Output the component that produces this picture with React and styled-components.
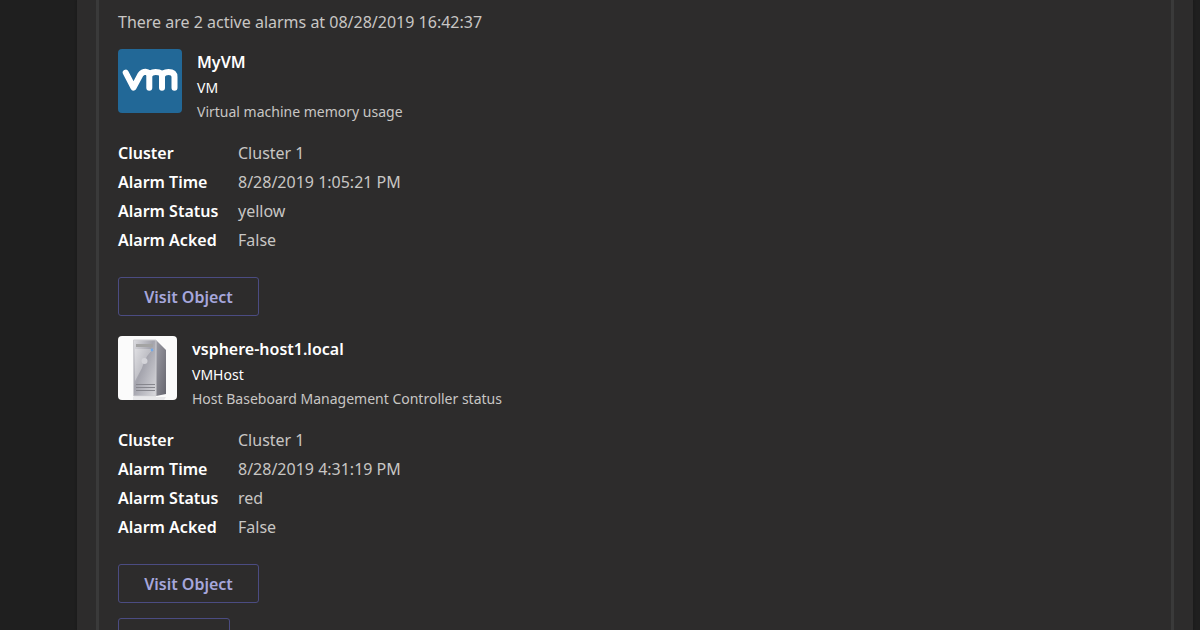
import React from "react";
import styled, { createGlobalStyle } from "styled-components";

const GlobalStyle = createGlobalStyle`
  *, *::before, *::after { box-sizing: border-box; }
  body {
    margin: 0;
    background: #1f1f1f;
    color: #c8c6c4;
    font: 16px/24px "Segoe UI", "Noto Sans", "Open Sans", sans-serif;
  }
`;

const Viewport = styled.div`
  display: flex;
  height: 100vh;
  padding: 0 7px 0 77px;
  overflow: hidden;
`;

const Message = styled.main`
  flex: 1;
  min-width: 0;
  padding: 0 19px;
  background: #2d2c2c;
  box-shadow: 0 0 2px #161616;
`;

const Card = styled.article`
  padding: 10px 19px;
  border: solid #3a3a3a;
  border-width: 0 3px;
`;

const Summary = styled.p`
  margin: 0 0 15px;
`;

const Section = styled.section`
  margin-bottom: ${(p) => (p.$last ? 15 : 20)}px;
`;

const Header = styled.header`
  display: flex;
  align-items: flex-start;
  gap: 15px;
  height: 76px;
  margin-bottom: 16px;

  svg { flex: none; display: block; }
`;

const Title = styled.h2`
  margin: 0;
  color: #fff;
  font-size: 16px;
  line-height: 26px;
  font-weight: 600;
`;

const Kind = styled.div`
  color: #fff;
  font-size: 14px;
  line-height: 26px;
`;

const Detail = styled.div`
  font-size: 14px;
  line-height: 22px;
`;

const Facts = styled.dl`
  display: grid;
  grid-template-columns: 100px 1fr;
  gap: 5px 20px;
  margin: 0 0 25px;
`;

const FactName = styled.dt`
  color: #fff;
  font-weight: 600;
  white-space: nowrap;
`;

const FactValue = styled.dd`
  margin: 0;
`;

const Action = styled.button`
  display: block;
  min-width: ${(p) => (p.$small ? 112 : 141)}px;
  height: 39px;
  padding: 0 16px;
  border: 1px solid #4b4c82;
  border-radius: 3px;
  background: transparent;
  color: #a6a7dc;
  font: inherit;
  font-weight: 600;
`;

const VmLogo = () => (
  <svg width="64" height="64" viewBox="0 0 64 64" role="img" aria-label="VM">
    <rect width="64" height="64" rx="4" fill="#226897" />
    <path
      d="M7.700 23.700 L15.500 38.700 L22.500 25.500 Q24.500 22.700 27.500 22.700 Q31.300 23 31.300 27 V38.700 M31.300 27 Q32 23 37.600 23 Q44 23 44 27 V38.700 M44 27 Q45 23 50.500 23 Q56.500 23 56.500 28 V38.700"
      fill="none" stroke="#fff" strokeWidth="6" strokeLinecap="round" strokeLinejoin="round"
    />
  </svg>
);

const ServerIcon = () => (
  <svg width="59" height="64" viewBox="0 0 59 64" role="img" aria-label="Server">
    <defs>
      <linearGradient id="front" x1="0" y1="0" x2="1" y2="1">
        <stop offset="0" stopColor="#dedee2" />
        <stop offset="0.450" stopColor="#a4a4ad" />
        <stop offset="1" stopColor="#dadade" />
      </linearGradient>
      <linearGradient id="side" x1="0" y1="0" x2="1" y2="1">
        <stop offset="0" stopColor="#9d9da6" />
        <stop offset="1" stopColor="#66666f" />
      </linearGradient>
    </defs>
    <rect width="59" height="64" rx="4" fill="#fbfbfb" />
    <path d="M15 61 H48 L46 64 H15 Z" fill="#e8e8ea" />
    <path d="M38 4 L48 14 V58 L38 60 Z" fill="url(#side)" />
    <path d="M15.500 4 H38 V60 H15.500 Z" fill="url(#front)" stroke="#cdcdd1" />
    <path d="M18 8 H35 V11 H18 Z" fill="#a4a4a4" />
    <path d="M17 13 H36 Q28 18 24 32 L17 45 Z" fill="#fff" opacity="0.300" />
    <circle cx="26.500" cy="25" r="3" fill="#d4d4d9" />
    <circle cx="34" cy="14" r="1.400" fill="#72a9e8" />
    <path d="M18 48.500 H37 M18 51.500 H37 M18 54.500 H37" stroke="#86868d" />
  </svg>
);

const alarms = [
  {
    icon: <VmLogo />,
    title: "MyVM",
    kind: "VM",
    detail: "Virtual machine memory usage",
    facts: [
      ["Cluster", "Cluster 1"],
      ["Alarm Time", "8/28/2019 1:05:21 PM"],
      ["Alarm Status", "yellow"],
      ["Alarm Acked", "False"],
    ],
  },
  {
    icon: <ServerIcon />,
    title: "vsphere-host1.local",
    kind: "VMHost",
    detail: "Host Baseboard Management Controller status",
    facts: [
      ["Cluster", "Cluster 1"],
      ["Alarm Time", "8/28/2019 4:31:19 PM"],
      ["Alarm Status", "red"],
      ["Alarm Acked", "False"],
    ],
  },
];

export default function App() {
  return (
    <>
      <GlobalStyle />
      <Viewport>
        <Message>
          <Card>
            <Summary>There are 2 active alarms at 08/28/2019 16:42:37</Summary>
            {alarms.map((alarm, i) => (
              <Section key={alarm.title} $last={i === alarms.length - 1}>
                <Header>
                  {alarm.icon}
                  <div>
                    <Title>{alarm.title}</Title>
                    <Kind>{alarm.kind}</Kind>
                    <Detail>{alarm.detail}</Detail>
                  </div>
                </Header>
                <Facts>
                  {alarm.facts.map(([name, value]) => (
                    <React.Fragment key={name}>
                      <FactName>{name}</FactName>
                      <FactValue>{value}</FactValue>
                    </React.Fragment>
                  ))}
                </Facts>
                <Action type="button">Visit Object</Action>
              </Section>
            ))}
            <Action type="button" $small aria-label="See more" />
          </Card>
        </Message>
      </Viewport>
    </>
  );
}
